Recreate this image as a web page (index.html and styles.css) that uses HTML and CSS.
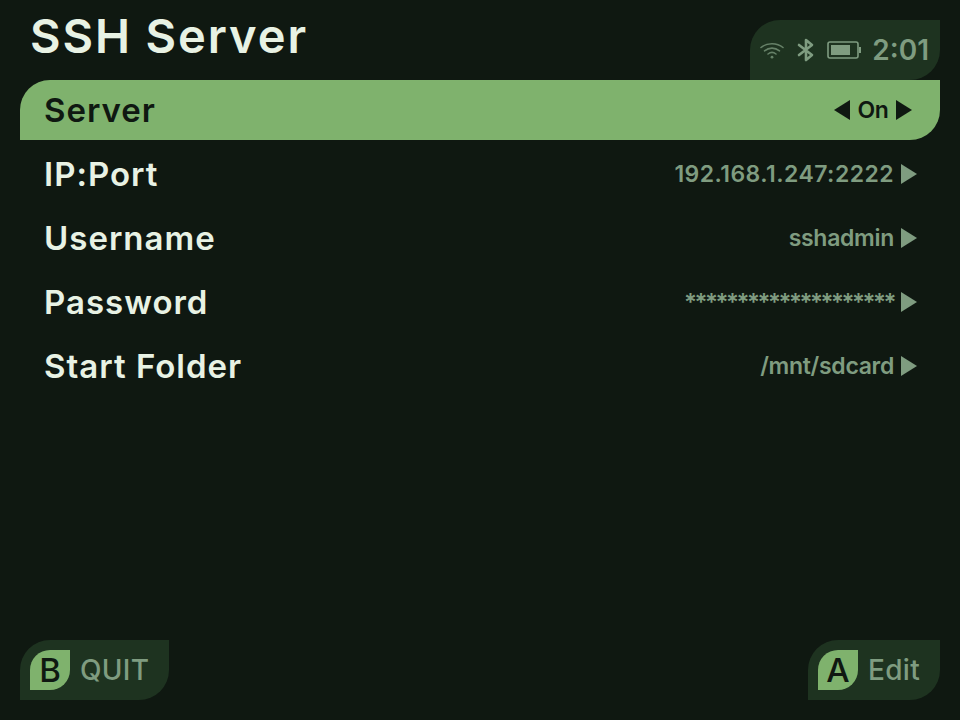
FILE: index.html
```html
<!DOCTYPE html>
<html lang="en">
<head>
    <meta charset="UTF-8">
    <title>SSH Server</title>
    <link rel="stylesheet" href="styles.css">
</head>
<body>
    <div class="screen">
        <header class="header">
            <h1 class="title">SSH Server</h1>
            <div class="status">
                <svg class="icon-wifi" width="26" height="20" viewBox="0 0 26 20" fill="none" stroke="currentColor" stroke-width="1.6" stroke-linecap="round">
                    <path d="M2 7.5C8 2.5 18 2.5 24 7.5"/>
                    <path d="M5.5 10.8C10 7.2 16 7.2 20.5 10.8"/>
                    <path d="M9 14C11.5 12 14.5 12 17 14"/>
                    <circle cx="13" cy="17.2" r="1.4" fill="currentColor" stroke="none"/>
                </svg>
                <svg class="icon-bt" width="18" height="24" viewBox="0 0 18 24" fill="none" stroke="currentColor" stroke-width="2.6" stroke-linejoin="round" stroke-linecap="round">
                    <path d="M2 7L15 17L9 22V2L15 7L2 17"/>
                </svg>
                <svg class="icon-battery" width="34" height="18" viewBox="0 0 34 18">
                    <rect x="1" y="1" width="30" height="16" rx="2" fill="none" stroke="currentColor" stroke-width="1.6"/>
                    <rect x="4" y="4" width="19" height="10" fill="currentColor"/>
                    <rect x="32" y="6" width="2" height="6" fill="currentColor"/>
                </svg>
                <span class="clock">2:01</span>
            </div>
        </header>

        <div class="list">
            <div class="row selected">
                <span class="label">Server</span>
                <span class="value">
                    <svg class="arrow" width="16" height="20" viewBox="0 0 16 20"><path d="M16 0V20L0 10Z"/></svg>
                    <span class="on">On</span>
                    <svg class="arrow" width="16" height="20" viewBox="0 0 16 20"><path d="M0 0V20L16 10Z"/></svg>
                </span>
            </div>
            <div class="row">
                <span class="label">IP:Port</span>
                <span class="value"><span class="digits">192.168.1.247:2222</span>
                    <svg class="arrow" width="16" height="20" viewBox="0 0 16 20"><path d="M0 0V20L16 10Z"/></svg>
                </span>
            </div>
            <div class="row">
                <span class="label">Username</span>
                <span class="value">sshadmin
                    <svg class="arrow" width="16" height="20" viewBox="0 0 16 20"><path d="M0 0V20L16 10Z"/></svg>
                </span>
            </div>
            <div class="row">
                <span class="label">Password</span>
                <span class="value"><span class="stars">********************</span>
                    <svg class="arrow" width="16" height="20" viewBox="0 0 16 20"><path d="M0 0V20L16 10Z"/></svg>
                </span>
            </div>
            <div class="row">
                <span class="label">Start Folder</span>
                <span class="value">/mnt/sdcard
                    <svg class="arrow" width="16" height="20" viewBox="0 0 16 20"><path d="M0 0V20L16 10Z"/></svg>
                </span>
            </div>
        </div>

        <footer class="footer">
            <div class="hint">
                <span class="key">B</span>
                <span class="hint-text">QUIT</span>
            </div>
            <div class="hint">
                <span class="key">A</span>
                <span class="hint-text">Edit</span>
            </div>
        </footer>
    </div>
</body>
</html>
```

FILE: styles.css
```css
html, body {
    margin: 0;
    background-color: #0f1811;
}
.screen {
    box-sizing: border-box;
    width: 960px;
    height: 720px;
    padding: 0 20px 20px;
    display: flex;
    flex-direction: column;
    font-family: Inter, sans-serif;
    color: #e8f2e4;
}
.header {
    height: 80px;
    display: flex;
    justify-content: space-between;
    align-items: flex-start;
}
.title {
    margin: 7px 0 0 10px;
    font-size: 47px;
    line-height: 58px;
    font-weight: 600;
    letter-spacing: 1.9px;
}
.status {
    margin-top: 20px;
    height: 60px;
    width: 190px;
    box-sizing: border-box;
    padding: 0 11px 0 9px;
    display: flex;
    align-items: center;
    justify-content: space-between;
    background-color: #1e3320;
    border-radius: 30px 0 30px 0;
    color: #7f9c80;
}
.icon-wifi {
    opacity: 0.75;
}
.clock {
    font-size: 28px;
    font-weight: 600;
}
.list {
    flex: 1;
    display: flex;
    flex-direction: column;
    gap: 4px;
}
.row {
    height: 60px;
    padding: 0 23px 0 24px;
    display: flex;
    justify-content: space-between;
    align-items: center;
}
.label {
    font-size: 33px;
    font-weight: 600;
    letter-spacing: 1px;
}
.value {
    display: flex;
    align-items: center;
    gap: 7px;
    font-size: 23px;
    font-weight: 600;
    letter-spacing: -0.3px;
    color: #7f9c80;
}
.digits {
    letter-spacing: 0.45px;
}
.stars {
    font-size: 24px;
    letter-spacing: -2.45px;
}
.arrow {
    fill: currentColor;
}
.selected {
    padding-right: 28px;
    background-color: #7fb26d;
    border-radius: 30px 0 30px 0;
    color: #0f1811;
}
.selected .value {
    color: #0f1811;
}
.on {
    width: 32px;
    text-align: center;
}
.footer {
    display: flex;
    justify-content: space-between;
}
.hint {
    height: 60px;
    box-sizing: border-box;
    padding: 0 20px 0 10px;
    display: flex;
    align-items: center;
    gap: 10px;
    background-color: #1e3320;
    border-radius: 30px 0 30px 0;
}
.key {
    width: 40px;
    height: 40px;
    display: flex;
    align-items: center;
    justify-content: center;
    background-color: #7fb26d;
    border-radius: 20px 0 20px 0;
    color: #0f1811;
    font-size: 33px;
    font-weight: 500;
}
.hint-text {
    font-size: 28px;
    font-weight: 500;
    letter-spacing: 0.3px;
    color: #7f9c80;
}
```
